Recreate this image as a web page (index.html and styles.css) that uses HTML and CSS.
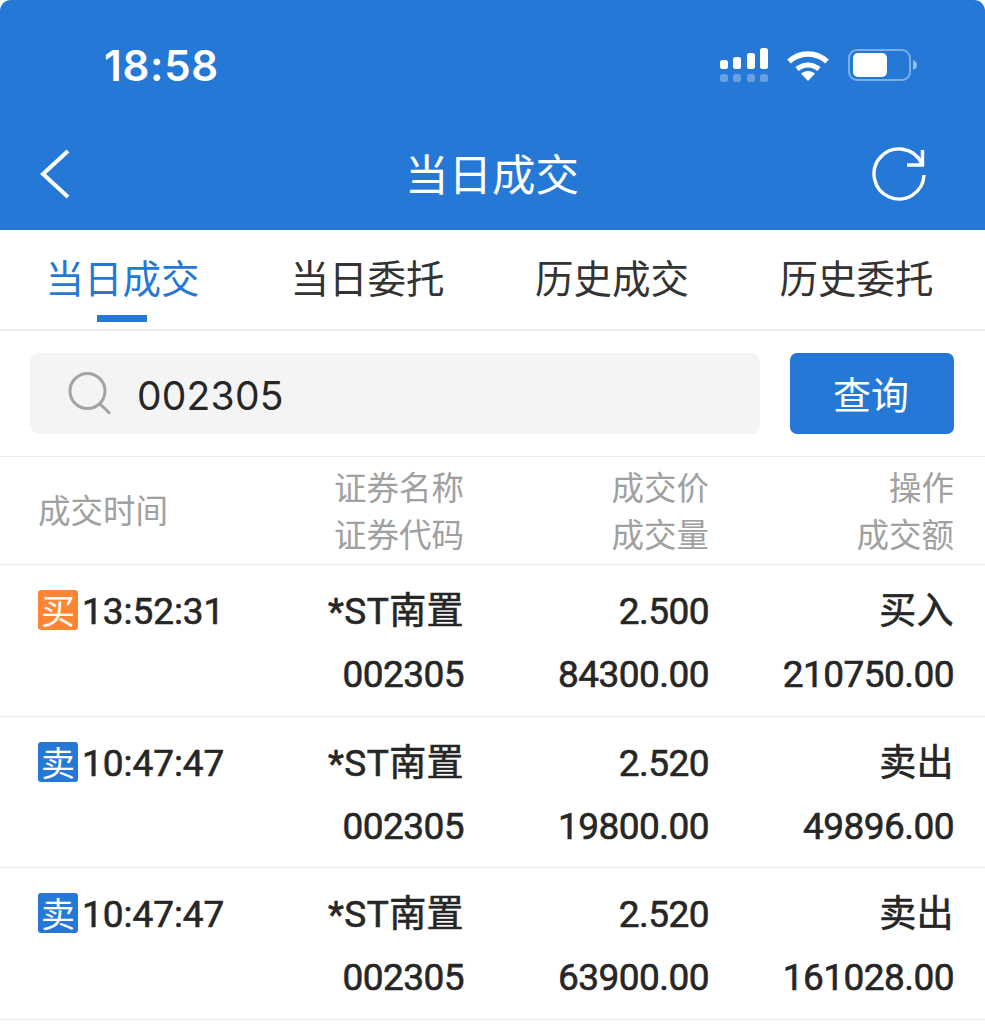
FILE: index.html
```html
<!DOCTYPE html>
<html lang="zh-CN">
<head>
<meta charset="utf-8">
<title>当日成交</title>
<link rel="stylesheet" href="styles.css">
</head>
<body>
<div class="app">
  <header class="header">
    <div class="status">
      <span class="clock">18:58</span>
      <span class="status-icons">
        <svg class="signal" width="52" height="36" viewBox="0 0 52 36"><g fill="#fff"><rect x="1" y="12" width="8" height="9" rx="2.5"/><rect x="14" y="9" width="8" height="12" rx="2.5"/><rect x="28" y="5" width="8" height="16" rx="2.5"/><rect x="41" y="0" width="8" height="21" rx="2.5"/></g><g fill="#fff" opacity=".3"><rect x="1" y="26" width="8" height="8" rx="2.5"/><rect x="14" y="26" width="8" height="8" rx="2.5"/><rect x="28" y="26" width="8" height="8" rx="2.5"/><rect x="41" y="26" width="8" height="8" rx="2.5"/></g></svg>
        <svg class="wifi" width="44" height="32" viewBox="0 0 44 32"><path d="M3 12.500C14 2.500 30 2.500 41 12.500" fill="none" stroke="#fff" stroke-width="5.400"/><path d="M11 20C17.500 14.500 26.500 14.500 33 20" fill="none" stroke="#fff" stroke-width="5"/><path d="M15 24.500C19.500 21 24.500 21 29 24.500L22 32Z" fill="#fff"/></svg>
        <svg class="battery" width="72" height="34" viewBox="0 0 72 34"><rect x="2" y="2" width="61" height="30" rx="8" fill="none" stroke="#fff" stroke-opacity=".4" stroke-width="2"/><rect x="6" y="5" width="34" height="24" rx="5" fill="#fff"/><path d="M66 12C69 13 70 15 70 17C70 19 69 21 66 22Z" fill="#fff" fill-opacity=".5"/></svg>
      </span>
    </div>
    <div class="nav">
      <svg class="back" width="32" height="50" viewBox="0 0 32 50"><path d="M29 2L4 25L29 48" fill="none" stroke="#fff" stroke-width="4"/></svg>
      <h1 class="title">当日成交</h1>
      <svg class="refresh" width="54" height="54" viewBox="0 0 54 54"><path d="M52 28A25 25 0 1 1 49.500 16" fill="none" stroke="#fff" stroke-width="3.400"/><path d="M50.500 3V18H35" fill="none" stroke="#fff" stroke-width="3.400"/></svg>
    </div>
  </header>

  <nav class="tabs">
    <span class="tab active">当日成交</span>
    <span class="tab">当日委托</span>
    <span class="tab">历史成交</span>
    <span class="tab">历史委托</span>
  </nav>

  <section class="search">
    <div class="search-box">
      <svg class="search-icon" width="44" height="44" viewBox="0 0 44 44"><circle cx="19.500" cy="19" r="17.500" fill="none" stroke="#a3a3a3" stroke-width="3"/><path d="M32 32L42 41.500" fill="none" stroke="#a3a3a3" stroke-width="3"/></svg>
      <span class="search-text">002305</span>
    </div>
    <button class="search-btn">查询</button>
  </section>

  <section class="table-head">
    <div class="col-time head-time">成交时间</div>
    <div class="col">证券名称<br>证券代码</div>
    <div class="col">成交价<br>成交量</div>
    <div class="col">操作<br>成交额</div>
  </section>

  <article class="row">
    <div class="col-time"><span class="badge buy">买</span><span class="time">13:52:31</span></div>
    <div class="col"><span class="name">*ST南置</span><br>002305</div>
    <div class="col">2.500<br>84300.00</div>
    <div class="col"><span class="name">买入</span><br>210750.00</div>
  </article>
  <article class="row">
    <div class="col-time"><span class="badge sell">卖</span><span class="time">10:47:47</span></div>
    <div class="col"><span class="name">*ST南置</span><br>002305</div>
    <div class="col">2.520<br>19800.00</div>
    <div class="col"><span class="name">卖出</span><br>49896.00</div>
  </article>
  <article class="row">
    <div class="col-time"><span class="badge sell">卖</span><span class="time">10:47:47</span></div>
    <div class="col"><span class="name">*ST南置</span><br>002305</div>
    <div class="col">2.520<br>63900.00</div>
    <div class="col"><span class="name">卖出</span><br>161028.00</div>
  </article>
</div>
</body>
</html>
```
FILE: styles.css
```css
* { box-sizing: border-box; }
html, body { margin: 0; padding: 0; background: #fff; }
body {
  width: 985px;
  height: 1024px;
  overflow: hidden;
  font-family: "Noto Sans CJK SC", sans-serif;
  color: #262626;
}
.app { width: 985px; }

.header {
  height: 230px;
  background: #2678d6;
  border-radius: 11px 11px 0 0;
  color: #fff;
}
.status {
  height: 130px;
  display: flex;
  justify-content: space-between;
  align-items: flex-start;
  padding: 40px 66px 0 104px;
}
.clock {
  font-family: Inter, sans-serif;
  font-weight: 600;
  font-size: 42px;
  letter-spacing: .7px;
  line-height: 52px;
}
.status-icons { display: flex; align-items: flex-start; margin-top: 8px; }
.signal { margin-right: 15px; }
.wifi { margin-right: 17px; margin-top: 1px; }

.nav {
  height: 100px;
  display: grid;
  grid-template-columns: 1fr auto 1fr;
  align-items: start;
  padding-top: 16px;
}
.back { margin: 3px 0 0 39px; }
.refresh { margin: 1px 59px 0 0; justify-self: end; }
.title {
  margin: -3px 0 0 -1px;
  font-size: 43.500px;
  font-weight: 400;
  line-height: 60px;
}

.tabs {
  height: 101px;
  display: grid;
  grid-template-columns: 245px 245px 244px 245px;
  border-bottom: 2px solid #ececec;
}
.tab {
  position: relative;
  text-align: center;
  font-size: 38.500px;
  line-height: 93px;
  color: #333;
}
.tab.active { color: #2678d6; }
.tab.active::after {
  content: "";
  position: absolute;
  left: 97px;
  bottom: 7px;
  width: 50px;
  height: 7px;
  background: #2678d6;
}

.search {
  height: 126px;
  padding: 22px 31px 22px 30px;
  display: flex;
  justify-content: space-between;
  border-bottom: 1px solid #ececec;
}
.search-box {
  width: 730px;
  height: 81px;
  background: #f4f4f4;
  border-radius: 9px;
  display: flex;
  align-items: center;
  padding-left: 38px;
}
.search-icon { margin-right: 25px; margin-top: 1px; }
.search-text {
  margin-top: 3px;
  font-family: Inter, sans-serif;
  font-size: 39px;
  letter-spacing: .2px;
  color: #262626;
}
.search-btn {
  width: 164px;
  height: 81px;
  border: 0;
  padding: 0 2px 3px 0;
  background: #2678d6;
  border-radius: 7px;
  color: #fff;
  font-family: inherit;
  font-size: 38px;
}

.table-head, .row {
  display: grid;
  grid-template-columns: 255px 171px 245px 245px;
  padding-left: 38px;
  border-bottom: 1px solid #ececec;
}
.table-head {
  height: 108px;
  padding-top: 5px;
  font-size: 32.500px;
  line-height: 47px;
  color: #a0a0a0;
}
.head-time { align-self: center; margin-top: -9px; }
.col { text-align: right; }

.row {
  height: 151.500px;
  padding-top: 15px;
  font-family: Roboto, "Noto Sans CJK SC", sans-serif;
  font-weight: 400;
  -webkit-text-stroke: .6px #262626;
  font-size: 37px;
  letter-spacing: -.55px;
  line-height: 63px;
  color: #262626;
}
.name { letter-spacing: .4px; }
.time { letter-spacing: -.05px; }
.col-time { display: flex; align-items: flex-start; }
.badge {
  width: 40px;
  height: 40px;
  margin: 10px 4px 0 0;
  border-radius: 3px;
  color: #fff;
  -webkit-text-stroke: 0;
  font-family: "Noto Sans CJK SC", sans-serif;
  font-weight: 400;
  font-size: 34px;
  letter-spacing: 0;
  line-height: 39px;
  text-align: center;
}
.buy { background: #fd8533; }
.sell { background: #2678d6; }
```
